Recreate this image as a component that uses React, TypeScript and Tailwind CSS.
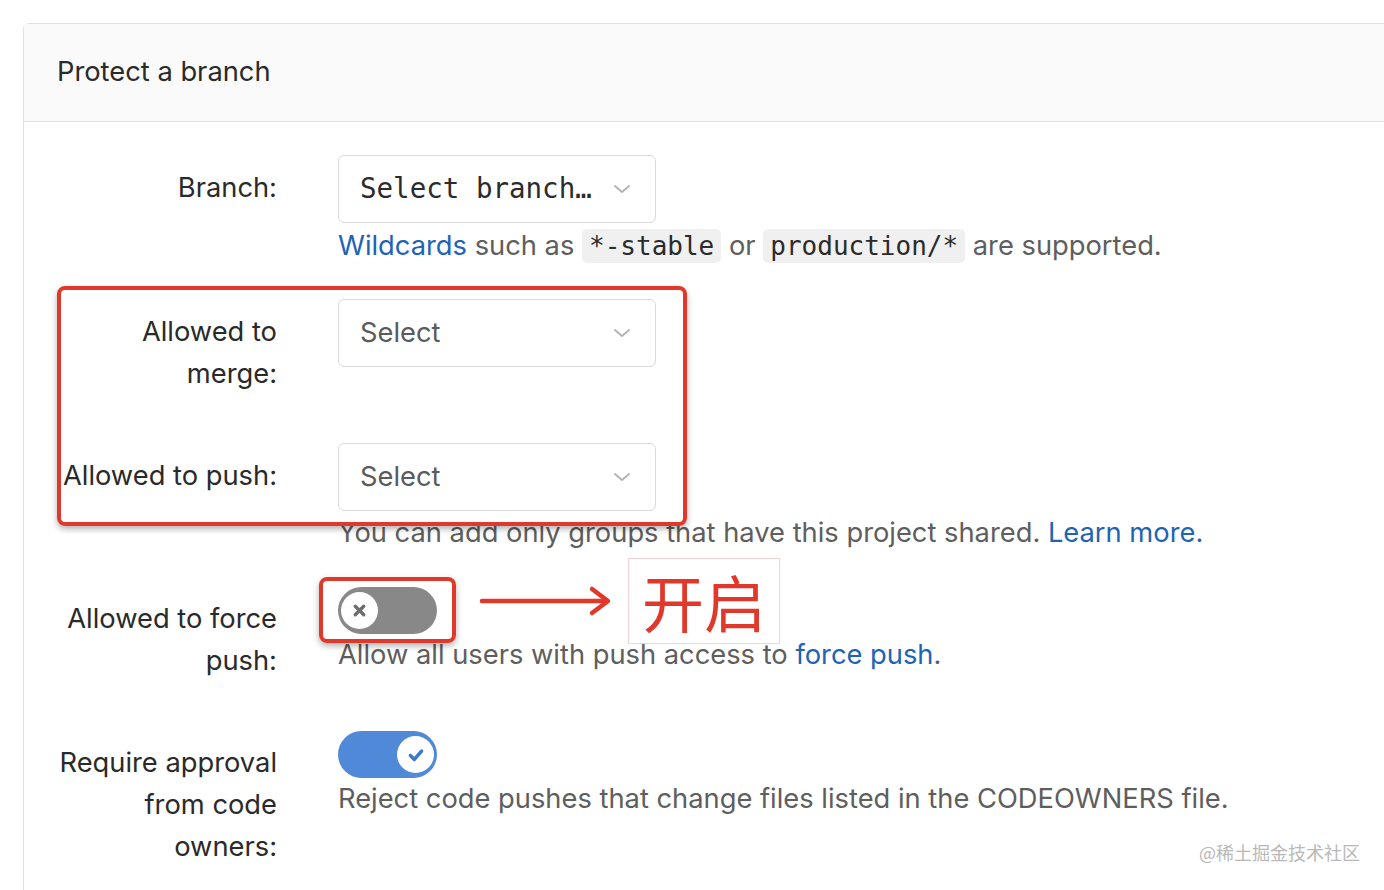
import React from "react";

const sans = "font-['Inter','Noto_Sans',sans-serif]";
const mono = "font-['DejaVu_Sans_Mono','Liberation_Mono',monospace]";

function Chevron() {
  return (
    <svg width="18" height="12" viewBox="0 0 18 12" className="shrink-0">
      <path d="M2 3 L9 9 L16 3" fill="none" stroke="#b5b5b5" strokeWidth="2" strokeLinecap="round" strokeLinejoin="round" />
    </svg>
  );
}

function SelectBox({ label, code = false }: { label: string; code?: boolean }) {
  return (
    <div className="flex h-[68px] w-[318px] items-center justify-between rounded-[6px] border border-[#dadada] bg-white pl-[21px] pr-[24px]">
      <span className={code ? `${mono} text-[27.5px] text-[#2b2b2b]` : `text-[27.3px] text-[#5a5a5a]`}>{label}</span>
      <Chevron />
    </div>
  );
}

function Toggle({ on }: { on: boolean }) {
  return (
    <div
      className={`flex h-[47px] w-[99px] items-center rounded-full px-[3px] ${
        on ? "justify-end bg-[#5089d8]" : "justify-start bg-[#888888]"
      }`}
    >
      <div className="flex h-[37px] w-[37px] items-center justify-center rounded-full bg-white">
        {on ? (
          <svg width="20" height="20" viewBox="0 0 18 18">
            <path d="M4 9.5 L7.5 13 L14 5.5" fill="none" stroke="#3f78cc" strokeWidth="3.2" strokeLinecap="round" strokeLinejoin="round" />
          </svg>
        ) : (
          <svg width="17" height="17" viewBox="0 0 16 16">
            <path d="M4 4 L12 12 M12 4 L4 12" stroke="#6e6e6e" strokeWidth="3.2" strokeLinecap="round" />
          </svg>
        )}
      </div>
    </div>
  );
}

function Row({ label, labelPt, children }: { label: React.ReactNode; labelPt: string; children: React.ReactNode }) {
  return (
    <div className="grid h-[144px] grid-cols-[253px_1fr] gap-x-[61px]">
      <div className={`text-right text-[27.3px] leading-[42px] text-[#2a2a2a] ${labelPt}`}>{label}</div>
      <div className="flex flex-col items-start">{children}</div>
    </div>
  );
}

const Help = ({ children, className = "" }: { children: React.ReactNode; className?: string }) => (
  <p className={`whitespace-nowrap text-[27.3px] leading-[42px] text-[#5e5e5e] ${className}`}>{children}</p>
);

const Link = ({ children }: { children: React.ReactNode }) => <span className="text-[#1f63b4]">{children}</span>;

const Code = ({ children }: { children: React.ReactNode }) => (
  <code className={`${mono} rounded-[5px] bg-[#f0f0f0] px-[7px] py-[2px] text-[26px] text-[#2b2b2b]`}>{children}</code>
);

export default function App() {
  return (
    <div className={`${sans} relative h-[890px] w-[1384px] overflow-hidden bg-white pl-[23px] pt-[23px]`}>
      <div className="w-[1420px] rounded-tl-[6px] border-l border-t border-[#e2e2e2] pb-[40px]">
        <div className="flex h-[98px] items-center border-b border-[#e2e2e2] bg-[#fafafa] pl-[33px] text-[27.3px] text-[#2a2a2a]">
          Protect a branch
        </div>

        <div className="relative pt-[33px]">
          <Row label="Branch:" labelPt="pt-[12px]">
            <SelectBox label="Select branch…" code />
            <Help className="mt-[2px]">
              <Link>Wildcards</Link> such as <Code>*-stable</Code> or <Code>production/*</Code> are supported.
            </Help>
          </Row>

          <Row
            label={
              <>
                Allowed to
                <br />
                merge:
              </>
            }
            labelPt="pt-[12px]"
          >
            <SelectBox label="Select" />
          </Row>

          <Row label="Allowed to push:" labelPt="pt-[12px]">
            <SelectBox label="Select" />
            <Help className="mt-[1px]">
              You can add only groups that have this project shared. <Link>Learn more.</Link>
            </Help>
          </Row>

          <Row
            label={
              <>
                Allowed to force
                <br />
                push:
              </>
            }
            labelPt="pt-[11px]"
          >
            <div className="relative">
              <Toggle on={false} />
              {/* annotation around toggle */}
              <div className="absolute left-[-19px] top-[-10px] h-[66px] w-[137px] rounded-[8px] border-[4px] border-[#e0382b] shadow-[0_3px_6px_rgba(0,0,0,0.3)]" />
              <svg className="absolute left-[140px] top-[-3px]" width="136" height="34" viewBox="0 0 136 34">
                <path d="M4 17 L128 17" stroke="#e0382b" strokeWidth="4.5" strokeLinecap="round" />
                <path d="M114 5 L130 17 L114 29" fill="none" stroke="#e0382b" strokeWidth="4.5" strokeLinecap="round" strokeLinejoin="round" />
              </svg>
              <div className="absolute left-[290px] top-[-29px] flex h-[86px] w-[152px] items-center justify-center border border-[#f6d2d2] font-['Noto_Sans_CJK_SC',sans-serif] text-[62px] leading-none text-[#e0382b]">
                开启
              </div>
            </div>
            <Help>
              Allow all users with push access to <Link>force push</Link>.
            </Help>
          </Row>

          <Row
            label={
              <>
                Require approval
                <br />
                from code
                <br />
                owners:
              </>
            }
            labelPt="pt-[11px]"
          >
            <Toggle on />
            <Help>Reject code pushes that change files listed in the CODEOWNERS file.</Help>
          </Row>

          {/* annotation around merge / push */}
          <div className="absolute left-[33px] top-[164px] h-[240px] w-[630px] rounded-[8px] border-[4px] border-[#e0382b] shadow-[0_3px_6px_rgba(0,0,0,0.3)]" />
        </div>
      </div>

      <div className="absolute bottom-[24px] right-[24px] font-['Noto_Sans_CJK_SC',sans-serif] text-[18px] text-[#b8b8b8]">
        @稀土掘金技术社区
      </div>
    </div>
  );
}
